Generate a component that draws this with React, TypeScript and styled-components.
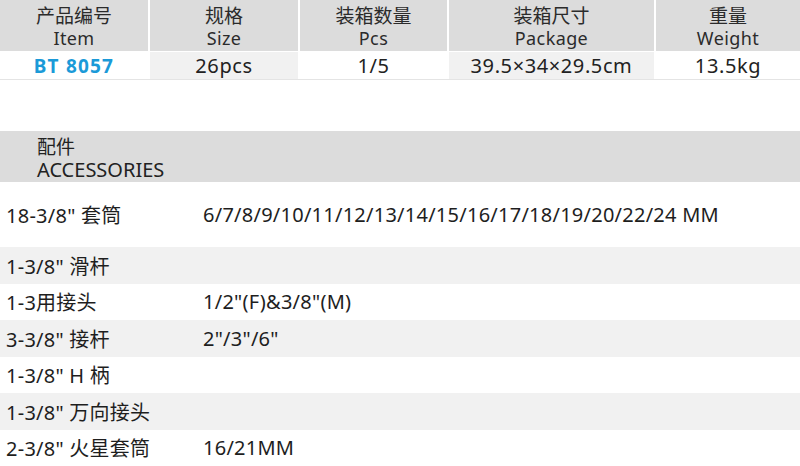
import React from "react";
import styled, { createGlobalStyle } from "styled-components";

/* ================================
   BASE
================================ */

const GlobalStyle = createGlobalStyle`
  html, body {
    margin: 0;
    padding: 0;
    background: #ffffff;
  }

  body {
    font-family: "Noto Sans", "Noto Sans CJK SC", sans-serif;
    color: #222222;
  }
`;

const Page = styled.div`
  width: 800px;
  height: 466px;
  overflow: hidden;
  display: flex;
  flex-direction: column;
`;

/* ================================
   TABELA DE ESPECIFICAÇÕES
================================ */

const SpecTable = styled.div`
  display: grid;
  grid-template-columns: 148px 148px 147px 205px 1fr;
  grid-template-rows: 51px 27px;
  column-gap: 2px;
  row-gap: 1px;
  border-bottom: 1px solid #e4e4e4;
`;

const HeadCell = styled.div`
  background: #dcdcdc;
  display: flex;
  flex-direction: column;
  align-items: center;
  justify-content: center;
  color: #2b2b2b;
`;

const HeadZh = styled.span`
  font-family: "Noto Sans CJK SC", sans-serif;
  font-size: 19px;
  line-height: 24px;
`;

const HeadEn = styled.span`
  font-family: "Noto Sans", "Open Sans", sans-serif;
  font-size: 18px;
  line-height: 22px;
  letter-spacing: 0.4px;
`;

const DataCell = styled.div<{ $shaded?: boolean; $accent?: boolean }>`
  background: ${(p) => (p.$shaded ? "#f1f1f1" : "#ffffff")};
  display: flex;
  align-items: center;
  justify-content: center;
  font-size: ${(p) => (p.$accent ? "19px" : "20px")};
  color: ${(p) => (p.$accent ? "#1b9ad8" : "#222222")};
  font-weight: ${(p) => (p.$accent ? 700 : 400)};
  letter-spacing: ${(p) => (p.$accent ? "1.2px" : "0.6px")};
`;

const Gap = styled.div`
  height: 51px;
`;

/* ================================
   ACESSÓRIOS
================================ */

const AccessoriesHead = styled.div`
  height: 51px;
  background: #dcdcdc;
  padding-left: 37px;
  display: flex;
  flex-direction: column;
  justify-content: center;
  color: #222222;
`;

const AccessoriesZh = styled.span`
  font-family: "Noto Sans CJK SC", sans-serif;
  font-size: 19px;
  line-height: 27px;
`;

const AccessoriesEn = styled.span`
  font-family: "Noto Sans", sans-serif;
  font-size: 20px;
  line-height: 22px;
`;

const AccessoryRow = styled.div<{ $shaded?: boolean; $tall?: boolean }>`
  height: ${(p) => (p.$tall ? "65px" : "36.5px")};
  flex-shrink: 0;
  background: ${(p) => (p.$shaded ? "#f1f1f1" : "#ffffff")};
  display: grid;
  grid-template-columns: 197px 1fr;
  align-items: center;
  padding-left: 6px;
  font-size: 20px;
  letter-spacing: 0.25px;
  color: #1e1e1e;
`;

const spec = [
  { zh: "产品编号", en: "Item", value: "BT 8057", accent: true },
  { zh: "规格", en: "Size", value: "26pcs", shaded: true },
  { zh: "装箱数量", en: "Pcs", value: "1/5" },
  { zh: "装箱尺寸", en: "Package", value: "39.5×34×29.5cm", shaded: true },
  { zh: "重量", en: "Weight", value: "13.5kg" },
];

const accessories = [
  { name: "18-3/8\" 套筒", detail: "6/7/8/9/10/11/12/13/14/15/16/17/18/19/20/22/24 MM" },
  { name: "1-3/8\" 滑杆", detail: "" },
  { name: "1-3用接头", detail: "1/2\"(F)&3/8\"(M)" },
  { name: "3-3/8\" 接杆", detail: "2\"/3\"/6\"" },
  { name: "1-3/8\" H 柄", detail: "" },
  { name: "1-3/8\" 万向接头", detail: "" },
  { name: "2-3/8\" 火星套筒", detail: "16/21MM" },
];

export default function App() {
  return (
    <>
      <GlobalStyle />
      <Page>
        <SpecTable>
          {spec.map((c) => (
            <HeadCell key={c.en}>
              <HeadZh>{c.zh}</HeadZh>
              <HeadEn>{c.en}</HeadEn>
            </HeadCell>
          ))}
          {spec.map((c) => (
            <DataCell key={c.value} $shaded={c.shaded} $accent={c.accent}>
              {c.value}
            </DataCell>
          ))}
        </SpecTable>

        <Gap />

        <AccessoriesHead>
          <AccessoriesZh>配件</AccessoriesZh>
          <AccessoriesEn>ACCESSORIES</AccessoriesEn>
        </AccessoriesHead>

        {accessories.map((a, i) => (
          <AccessoryRow key={a.name} $tall={i === 0} $shaded={i % 2 === 1}>
            <span>{a.name}</span>
            <span>{a.detail}</span>
          </AccessoryRow>
        ))}
      </Page>
    </>
  );
}
